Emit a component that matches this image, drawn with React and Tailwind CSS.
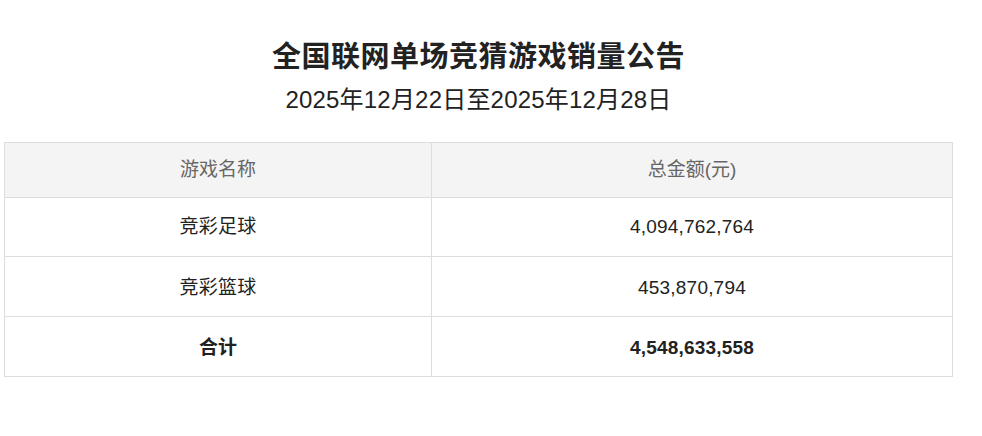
export default function App() {
  const rows = [
    { name: "竞彩足球", amount: "4,094,762,764" },
    { name: "竞彩篮球", amount: "453,870,794" },
  ];
  return (
    <div
      className="w-[982px] h-[436px] bg-white text-[#222]"
      style={{ fontFamily: '"Liberation Sans", "Noto Sans CJK SC", sans-serif' }}
    >
      <div className="pt-[37px] pl-[4px] w-[953px]">
        <h1 className="text-center text-[29px] leading-[40px] font-bold text-[#222] tracking-[0.5px]">
          全国联网单场竞猜游戏销量公告
        </h1>
        <div className="text-center text-[24px] leading-[32px] mt-[7px] text-[#222] tracking-[0.2px]">
          2025年12月22日至2025年12月28日
        </div>
        <table className="mt-[26px] w-[949px] border-collapse text-[19px]">
          <thead>
            <tr className="bg-[#f4f4f4] h-[55px]">
              <th className="w-[427px] border border-[#dddddd] font-normal text-[#666] pt-[1px]">游戏名称</th>
              <th className="border border-[#dddddd] font-normal text-[#666] pt-[1px]">总金额(元)</th>
            </tr>
          </thead>
          <tbody>
            <tr className="h-[59px]">
              <td className="border border-[#dddddd] text-center tracking-[0.2px] pt-[1px]">{rows[0].name}</td>
              <td className="border border-[#dddddd] text-center tracking-[0.2px] pt-[1px]">{rows[0].amount}</td>
            </tr>
            <tr className="h-[60px]">
              <td className="border border-[#dddddd] text-center tracking-[0.2px] pt-[3px]">{rows[1].name}</td>
              <td className="border border-[#dddddd] text-center tracking-[0.2px] pt-[3px]">{rows[1].amount}</td>
            </tr>
            <tr className="h-[60px]">
              <td className="border border-[#dddddd] text-center font-bold pt-[3px]">合计</td>
              <td className="border border-[#dddddd] text-center font-bold tracking-[0.2px] pt-[3px]">4,548,633,558</td>
            </tr>
          </tbody>
        </table>
      </div>
    </div>
  );
}
